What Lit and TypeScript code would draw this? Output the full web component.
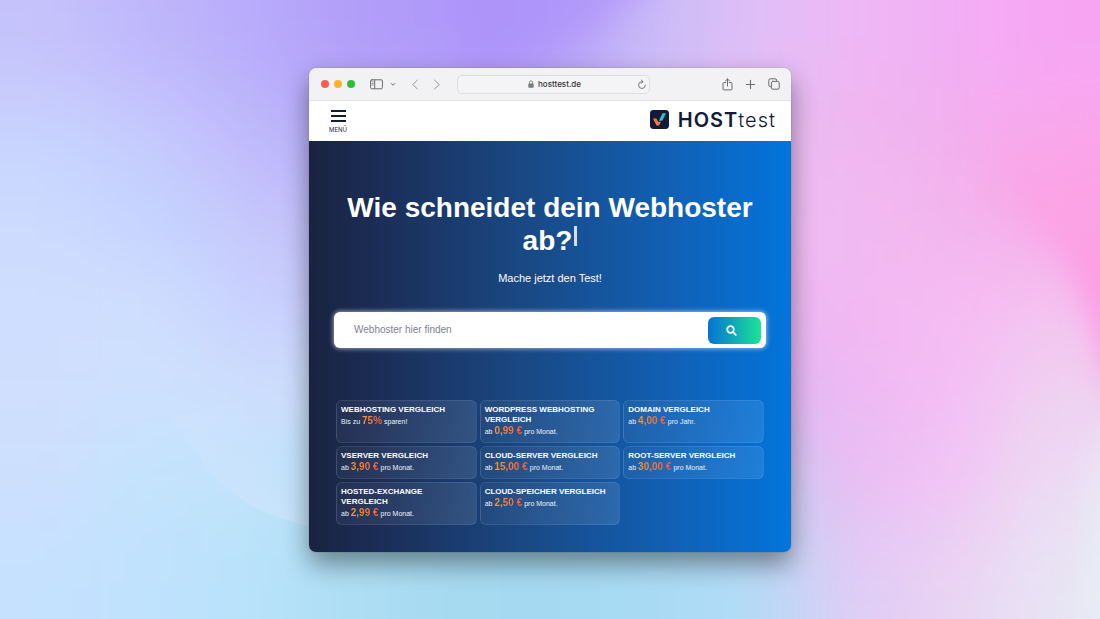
import { LitElement, html, svg, css } from "lit";
import { customElement } from "lit/decorators.js";

interface Offer {
  title: string;
  before: string;
  value: string;
  after: string;
}

const OFFERS: Offer[] = [
  { title: "Webhosting Vergleich", before: "Bis zu", value: "75%", after: "sparen!" },
  { title: "WordPress Webhosting Vergleich", before: "ab", value: "0,99 €", after: "pro Monat." },
  { title: "Domain Vergleich", before: "ab", value: "4,00 €", after: "pro Jahr." },
  { title: "vServer Vergleich", before: "ab", value: "3,90 €", after: "pro Monat." },
  { title: "Cloud-Server Vergleich", before: "ab", value: "15,00 €", after: "pro Monat." },
  { title: "Root-Server Vergleich", before: "ab", value: "30,00 €", after: "pro Monat." },
  { title: "Hosted-Exchange Vergleich", before: "ab", value: "2,99 €", after: "pro Monat." },
  { title: "Cloud-Speicher Vergleich", before: "ab", value: "2,50 €", after: "pro Monat." },
];

/* Colour mesh, row by row; a blur melts the cells into each other. */
const MESH: string[][] = [
  "c5c2fb bfb6fb b9acfb b19ef9 b09af9 b29df9 c8bcf8 dfbff7 eeb8f5 f2aff4 f7a5f3",
  "c8d3ff c5cbfe bfb9fb b7a9fa b2a0f8 b8a6f7 d0bff4 e6bcf1 efb7f0 f2b0ee f9a9ed",
  "cbdbfe c5d3ff c6c8fc c0bcf9 bcb0f7 c4b4f5 d8bbf2 eabbf2 f1bbf2 f3b5ee f8ace8",
  "d0ddfe cfe0fe c9d1fe c9cefb c6c4f8 cabcf5 d8b8f2 e8b6f2 f2b8f3 f5bcf3 f4c4f0",
  "cfdffd cce2fd cfdffd cfe0fb c6dcf8 c0d0f4 ccc0f2 dcb5f2 edb9f4 f4bdf4 efd3f2",
  "cce0fe c3e3fd bfe4fb b3e1f6 a8ddf0 a6d9ef aed8f0 bcd2f2 e9bdf4 f1c5f4 ecdcf3",
  "c5e1fe bfe2fd b9e2fb addef4 a6daf1 a5d9f1 a8daf4 b2dcf7 dfccf5 ead3f4 e8e5f4",
].map((row) => row.split(" "));

/* Soft colour field behind the browser window. */
@customElement("color-wallpaper")
class ColorWallpaper extends LitElement {
  static styles = css`
    :host {
      display: block;
    }
    .art {
      display: block;
      width: 100%;
      height: 100%;
    }
  `;

  private cell(color: string, column: number, row: number) {
    const left = column === 0 ? -200 : column * 100;
    const right = column === 10 ? 1300 : column * 100 + 101;
    const top = row === 0 ? -200 : row * 88.4;
    const bottom = row === 6 ? 820 : row * 88.4 + 89.4;
    return svg`<rect x=${left} y=${top} width=${right - left} height=${bottom - top} fill="#${color}" />`;
  }

  render() {
    return html`
      <svg class="art" viewBox="0 0 1100 619" preserveAspectRatio="none" aria-hidden="true">
        <defs>
          <filter id="mesh" filterUnits="userSpaceOnUse" x="-200" y="-200" width="1500" height="1020" color-interpolation-filters="sRGB">
            <feGaussianBlur stdDeviation="42" />
          </filter>
          <filter id="edge" filterUnits="userSpaceOnUse" x="-200" y="-200" width="1500" height="1020" color-interpolation-filters="sRGB">
            <feGaussianBlur stdDeviation="15" />
          </filter>
          <linearGradient id="arc" gradientUnits="userSpaceOnUse" x1="270" y1="420" x2="230" y2="495">
            <stop offset="0" stop-color="#d0e2fc" stop-opacity="0" />
            <stop offset="1" stop-color="#cfe3fb" stop-opacity="0.7" />
          </linearGradient>
          <linearGradient id="wedge" gradientUnits="userSpaceOnUse" x1="1070" y1="100" x2="1100" y2="290">
            <stop offset="0" stop-color="#ff9ae4" stop-opacity="0" />
            <stop offset="1" stop-color="#ff98e1" stop-opacity="0.9" />
          </linearGradient>
        </defs>
        <g filter="url(#mesh)">${MESH.map((row, y) => row.map((color, x) => this.cell(color, x, y)))}</g>
        <path d="M420 -80H720L640 0L570 40L470 90Z" fill="#ad90f9" opacity="0.6" filter="url(#edge)" />
        <path d="M960 60L1000 190L1062 258Q1094 310 1108 385H1180V60Z" fill="url(#wedge)" filter="url(#edge)" />
        <path d="M1108 430Q1085 480 1080 619L1180 660V430Z" fill="#e8eef5" opacity="0.8" filter="url(#edge)" />
        <path d="M170 415Q210 478 245 502Q270 518 330 532V400Z" fill="url(#arc)" />
      </svg>
    `;
  }
}

/* Safari-like title bar. */
@customElement("browser-toolbar")
class BrowserToolbar extends LitElement {
  static styles = css`
    :host {
      display: block;
      font-family: Inter, "Liberation Sans", sans-serif;
    }
    .bar {
      display: flex;
      align-items: center;
      height: 32px;
      padding: 0 11px 0 12px;
      background: #f2f1f3;
      border-bottom: 1px solid #e3e2e4;
    }
    button {
      display: grid;
      place-items: center;
      padding: 0;
      border: 0;
      background: none;
      color: #6b6b6e;
    }
    svg {
      display: block;
      fill: none;
      stroke: currentColor;
      stroke-linecap: round;
      stroke-linejoin: round;
    }
    .lights {
      display: flex;
      gap: 5px;
      margin-right: 15px;
    }
    .light {
      width: 8px;
      height: 8px;
      border-radius: 50%;
    }
    .close {
      background: #f95c50;
    }
    .minimize {
      background: #fbb429;
    }
    .zoom {
      background: #28c136;
    }
    .panel {
      display: flex;
      align-items: center;
      gap: 7px;
    }
    .history {
      display: flex;
      gap: 14px;
      margin: 0 16px 0 15px;
      color: #98989b;
    }
    .history button {
      color: inherit;
    }
    .address {
      display: flex;
      align-items: center;
      flex: 0 1 191px;
      min-width: 0;
      height: 17px;
      border: 1px solid #dddce0;
      border-radius: 5px;
      background: #f4f3f5;
    }
    .location {
      display: flex;
      flex: 1;
      justify-content: center;
      align-items: center;
      gap: 4px;
      padding-left: 14px;
      color: #7c7c80;
    }
    .url {
      field-sizing: content;
      padding: 0;
      border: 0;
      background: none;
      color: #343437;
      font: 500 8px/12px Inter, "Liberation Sans", sans-serif;
      outline: none;
    }
    .reload {
      margin-right: 2px;
    }
    .actions {
      display: flex;
      align-items: center;
      gap: 12px;
      margin-left: auto;
    }
  `;

  render() {
    return html`
      <div class="bar">
        <div class="lights">
          <button class="light close" aria-label="Schließen"></button>
          <button class="light minimize" aria-label="Minimieren"></button>
          <button class="light zoom" aria-label="Vergrößern"></button>
        </div>
        <div class="panel">
          <button aria-label="Seitenleiste">
            <svg width="13" height="11" viewBox="0 0 13 11" stroke-width="1">
              <rect x="0.6" y="0.8" width="11.8" height="9" rx="1.2" />
              <path d="M4.7 1V9.6" />
              <path d="M2 2.8H3.2M2 4.4H3.2M2 6H3.2" stroke-width="0.7" />
            </svg>
          </button>
          <button aria-label="Tabgruppen">
            <svg width="6" height="5" viewBox="0 0 6 5" stroke-width="1"><path d="M1.2 1.5L3 3.3L4.8 1.5" /></svg>
          </button>
        </div>
        <div class="history">
          <button aria-label="Zurück">
            <svg width="8" height="11" viewBox="0 0 8 11" stroke-width="1"><path d="M6.4 1.2L1.6 5.5L6.4 9.8" /></svg>
          </button>
          <button aria-label="Vorwärts">
            <svg width="8" height="11" viewBox="0 0 8 11" stroke-width="1"><path d="M1.6 1.2L6.4 5.5L1.6 9.8" /></svg>
          </button>
        </div>
        <div class="address">
          <div class="location">
            <svg width="6" height="8" viewBox="0 0 6 8" stroke-width="0.9">
              <path d="M1.5 3.8V2.3A1.5 1.5 0 0 1 4.5 2.3V3.8" />
              <rect x="0.3" y="3.5" width="5.4" height="4.2" rx="0.6" fill="currentColor" stroke="none" />
            </svg>
            <input class="url" type="text" aria-label="Adresse" value="hosttest.de" />
          </div>
          <button class="reload" aria-label="Neu laden">
            <svg width="10" height="11" viewBox="0 0 10 11" stroke-width="0.9">
              <path d="M5.6 2.7H5A3.4 3.4 0 1 0 8.4 6.1" />
              <path d="M4.3 1L6 2.7L4.3 4.4" />
            </svg>
          </button>
        </div>
        <div class="actions">
          <button aria-label="Teilen">
            <svg width="11" height="13" viewBox="0 0 11 13" stroke-width="1">
              <path d="M3.8 4.6H1.9Q1 4.6 1 5.5V11Q1 11.9 1.9 11.9H9.1Q10 11.9 10 11V5.5Q10 4.6 9.1 4.6H7.2" />
              <path d="M5.5 8V1M3.4 3L5.5 0.9L7.6 3" />
            </svg>
          </button>
          <button aria-label="Neuer Tab">
            <svg width="11" height="11" viewBox="0 0 11 11" stroke-width="1.1"><path d="M5.5 1.4V9.6M1.4 5.5H9.6" /></svg>
          </button>
          <button aria-label="Tabübersicht">
            <svg width="12" height="12" viewBox="0 0 12 12" stroke-width="1">
              <rect x="3.4" y="3.4" width="7.8" height="7.8" rx="1.4" />
              <path d="M3.2 8.6H2.2Q0.8 8.6 0.8 7.2V2.2Q0.8 0.8 2.2 0.8H7.2Q8.6 0.8 8.6 2.2V3.2" />
            </svg>
          </button>
        </div>
      </div>
    `;
  }
}

@customElement("site-header")
class SiteHeader extends LitElement {
  static styles = css`
    :host {
      display: block;
    }
    .header {
      display: flex;
      align-items: center;
      justify-content: space-between;
      height: 40px;
      padding: 0 15px 0 20px;
      background: #fff;
    }
    .menu {
      display: grid;
      justify-items: center;
      gap: 3px;
      padding: 0;
      border: 0;
      background: none;
      color: #1b2240;
      font: 6px/8px Inter, "Liberation Sans", sans-serif;
    }
    .bars {
      display: block;
      fill: #151a35;
    }
    .brand {
      display: flex;
      align-items: center;
      gap: 9px;
      padding-bottom: 3px;
      color: #131a36;
      font: 20px/24px Inter, "Liberation Sans", sans-serif;
      letter-spacing: 1px;
      text-decoration: none;
    }
    .mark {
      display: block;
    }
    .strong {
      font-weight: 600;
    }
    .light {
      font-weight: 300;
    }
  `;

  render() {
    return html`
      <header class="header">
        <button class="menu">
          <svg class="bars" width="15" height="14" viewBox="0 0 15 14" aria-hidden="true">
            <path d="M0 1H15V3H0ZM0 6H15V8H0ZM0 11H15V13H0Z" />
          </svg>
          MENÜ
        </button>
        <a class="brand" href="#">
          <svg class="mark" width="19" height="19" viewBox="0 0 19 19" aria-hidden="true">
            <rect width="19" height="19" rx="3.4" fill="#131a36" />
            <path d="M12.5 3.2H16L12.3 10.8H8.9Z" fill="#25c2d6" />
            <path d="M3 8.5H6.4L8.1 11.8H10.9L9.1 15.6H6.5Z" fill="#fb7440" />
          </svg>
          <span><span class="strong">HOST</span><span class="light">test</span></span>
        </a>
      </header>
    `;
  }
}

@customElement("host-search")
class HostSearch extends LitElement {
  static styles = css`
    :host {
      display: block;
    }
    .search {
      display: flex;
      align-items: center;
      height: 36px;
      padding: 0 5px 0 20px;
      box-sizing: border-box;
      border-radius: 6px;
      background: #fff;
      box-shadow: 0 0 4px 1px rgba(225, 232, 255, 0.6);
    }
    .field {
      flex: 1;
      min-width: 0;
      padding: 0;
      border: 0;
      outline: none;
      background: none;
      color: #1b2240;
      font: 10px/14px "Liberation Sans", Arial, sans-serif;
    }
    .field::placeholder {
      color: #7c8190;
      opacity: 1;
    }
    .submit {
      display: grid;
      place-items: center;
      width: 53px;
      height: 27px;
      padding: 0 6px 0 0;
      border: 0;
      border-radius: 6px;
      background: linear-gradient(90deg, #0673d4, #1be396);
    }
    .glass {
      display: block;
      fill: none;
      stroke: #fff;
      stroke-width: 1.8;
      stroke-linecap: round;
    }
  `;

  render() {
    return html`
      <form class="search" @submit=${(e: Event) => e.preventDefault()}>
        <input class="field" type="search" aria-label="Webhoster suchen" placeholder="Webhoster hier finden" />
        <button class="submit" aria-label="Suchen">
          <svg class="glass" width="11" height="11" viewBox="0 0 11 11" aria-hidden="true">
            <circle cx="4.5" cy="4.5" r="3.3" />
            <path d="M7.1 7.1L9.8 9.8" />
          </svg>
        </button>
      </form>
    `;
  }
}

@customElement("offer-grid")
class OfferGrid extends LitElement {
  static styles = css`
    :host {
      display: block;
    }
    .grid {
      display: grid;
      grid-template-columns: repeat(3, minmax(0, 1fr));
      gap: 3px;
    }
    .card {
      display: block;
      padding: 4px 10px 4px 4px;
      border: 1px solid rgba(255, 255, 255, 0.09);
      border-radius: 6px;
      background: linear-gradient(115deg, rgba(255, 255, 255, 0.04), rgba(255, 255, 255, 0.11));
      color: #fff;
      text-decoration: none;
    }
    .title {
      margin: 0 0 1px;
      font: 700 8px/10px "Liberation Sans", Arial, sans-serif;
      text-transform: uppercase;
    }
    .price {
      height: 12px;
      margin: 0;
      font: 7px/12px "Liberation Sans", Arial, sans-serif;
      color: #eef3fb;
    }
    .value {
      font-size: 10px;
      line-height: 10px;
      font-weight: 700;
      background: linear-gradient(90deg, #f79a31, #f4593f);
      background-clip: text;
      -webkit-background-clip: text;
      color: transparent;
    }
  `;

  render() {
    return html`
      <div class="grid">
        ${OFFERS.map(
          (o) => html`
            <a class="card" href="#">
              <h2 class="title">${o.title}</h2>
              <p class="price">${o.before} <span class="value">${o.value}</span> ${o.after}</p>
            </a>
          `
        )}
      </div>
    `;
  }
}

@customElement("app-root")
class AppRoot extends LitElement {
  static styles = css`
    :host {
      display: grid;
      grid-template-columns: minmax(0, 1fr);
      min-height: 100vh;
      overflow: hidden;
      font-family: "Liberation Sans", Arial, sans-serif;
    }
    .wallpaper,
    .stage {
      grid-area: 1 / 1;
    }
    .wallpaper {
      min-height: 0;
      contain: size;
    }
    .stage {
      position: relative;
      display: flex;
      align-items: center;
      justify-content: center;
      padding: 17px 16px 16px;
    }
    .window {
      flex: 0 1 482px;
      min-width: 0;
      border-radius: 7px;
      box-shadow: 0 0 1px rgba(0, 0, 0, 0.45), 0 12px 26px rgba(0, 0, 0, 0.42);
    }
    .clip {
      overflow: hidden;
      border-radius: 7px;
    }
    .hero {
      padding: 50px 25px 27px;
      color: #fff;
      text-align: center;
      background: linear-gradient(90deg, #1a2340 0%, #1b2d56 14%, #194985 45%, #1160b5 75%, #0275dc 100%);
    }
    .headline {
      margin: 0 0 14px;
      font-size: 28px;
      font-weight: 700;
      line-height: 33px;
    }
    .caret {
      display: inline-block;
      width: 3px;
      height: 20px;
      margin-left: 2px;
      vertical-align: 4px;
      background: #d3def5;
    }
    .lead {
      margin: 0 0 27px;
      font-size: 11px;
      line-height: 14px;
    }
    .offers {
      margin: 52px 2px 0;
      text-align: left;
    }
  `;

  render() {
    return html`
      <color-wallpaper class="wallpaper"></color-wallpaper>
      <div class="stage">
        <div class="window">
          <div class="clip">
            <browser-toolbar></browser-toolbar>
            <site-header></site-header>
            <main class="hero">
              <h1 class="headline">Wie schneidet dein Webhoster ab?<span class="caret"></span></h1>
              <p class="lead">Mache jetzt den Test!</p>
              <host-search></host-search>
              <offer-grid class="offers"></offer-grid>
            </main>
          </div>
        </div>
      </div>
    `;
  }
}
